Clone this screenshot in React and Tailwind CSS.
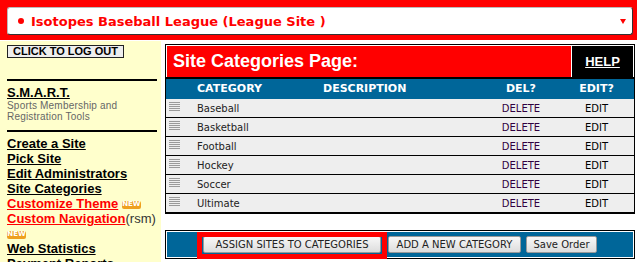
const categories = ['Baseball', 'Basketball', 'Football', 'Hockey', 'Soccer', 'Ultimate'];

function DragHandle() {
  return (
    <svg width="11" height="10" viewBox="0 0 11 10">
      {[0.5, 2.5, 4.5, 6.5, 8.5].map((y) => (
        <line key={y} x1="0" x2="11" y1={y} y2={y} stroke="#9a9a9a" strokeWidth="1" />
      ))}
    </svg>
  );
}

function NewBadge() {
  return (
    <span className="inline-flex items-center justify-center align-middle w-[19px] h-[8px] rounded-[2px] bg-[#eea020] text-white text-[7px] font-bold leading-none font-['DejaVu_Sans',sans-serif] no-underline">
      NEW
    </span>
  );
}

function SideLink({ children, red }) {
  return (
    <a className={red ? 'underline text-[#ff0000]' : 'underline text-black'} href="#">
      {children}
    </a>
  );
}

export default function App() {
  return (
    <div className="w-[640px] h-[262px] overflow-hidden bg-white font-['Liberation_Sans',Arial,sans-serif]">
      {/* site picker */}
      <div className="w-[637px] h-[40px] bg-[#ff0000] pt-[7px] pl-[7px] pr-[4px] pb-[5px]">
        <div className="h-full bg-white rounded-[3px] border border-[#bbb] border-r-[#333] border-b-[#333] flex items-center pl-[10px] pr-[6px]">
          <span className="w-[6px] h-[6px] rounded-full bg-[#ff0000]" />
          <span className="ml-[7px] text-[13px] leading-none font-bold text-[#ff0000] font-['DejaVu_Sans',sans-serif]">
            Isotopes Baseball League (League Site )
          </span>
          <svg className="ml-auto" width="6" height="5" viewBox="0 0 6 5">
            <polygon points="0,0 6,0 3,5" fill="#ff0000" />
          </svg>
        </div>
      </div>

      <div className="flex mt-[1px] h-[221px]">
        {/* sidebar */}
        <div className="w-[161px] shrink-0 bg-[#ffffcc] pl-[7px] pt-[4px]">
          <button className="w-[117px] h-[13px] border border-[#222] bg-[#eeeeee] text-[11px] leading-[11px] font-bold text-black flex items-center justify-center">
            CLICK TO LOG OUT
          </button>
          <div className="mt-[21px] w-[150px] h-[2px] bg-black" />
          <div className="mt-[4px] text-[13px] leading-[15px] font-bold">
            <SideLink>S.M.A.R.T.</SideLink>
          </div>
          <div className="text-[10px] leading-[11px] tracking-[0.2px] text-[#666]">
            Sports Membership and
            <br />
            Registration Tools
          </div>
          <div className="mt-[8px] w-[150px] h-[2px] bg-black" />
          <div className="mt-[4px] text-[13px] leading-[15px] font-bold whitespace-nowrap">
            <div><SideLink>Create a Site</SideLink></div>
            <div><SideLink>Pick Site</SideLink></div>
            <div><SideLink>Edit Administrators</SideLink></div>
            <div><SideLink>Site Categories</SideLink></div>
            <div>
              <SideLink red>Customize Theme</SideLink> <NewBadge />
            </div>
            <div>
              <SideLink red>Custom Navigation</SideLink>
              <span className="font-normal text-[#333]">(rsm)</span>
            </div>
            <div><NewBadge /></div>
            <div><SideLink>Web Statistics</SideLink></div>
            <div><SideLink>Payment Reports</SideLink></div>
          </div>
        </div>

        {/* content */}
        <div className="ml-[4px] mt-[3px] w-[470px]">
          <div className="border border-black">
            <div className="flex gap-[1px] p-[1px] pb-0 border-b-2 border-black">
              <div className="flex-1 h-[31px] bg-[#ff0000] flex items-center pl-[6px] text-white text-[18px] font-bold">
                Site Categories Page:
              </div>
              <div className="w-[61px] h-[31px] bg-black flex items-center justify-center">
                <a href="#" className="text-white underline text-[13px] font-bold">HELP</a>
              </div>
            </div>

            <div className="font-['DejaVu_Sans',Verdana,sans-serif]">
              <div className="grid grid-cols-[31px_126px_160px_76px_1fr] h-[20px] items-center bg-[#006699] text-white text-[11px] font-bold">
                <span />
                <span>CATEGORY</span>
                <span>DESCRIPTION</span>
                <span className="text-center">DEL?</span>
                <span className="text-center">EDIT?</span>
              </div>
              {categories.map((name) => (
                <div
                  key={name}
                  className="grid grid-cols-[31px_126px_160px_76px_1fr] h-[19px] items-center bg-[#eeeeee] border-b border-black text-[10px] text-[#222]"
                >
                  <span className="self-start pt-[3px] pl-[3px]">
                    <DragHandle />
                  </span>
                  <span>{name}</span>
                  <span />
                  <span className="text-center text-[#300040]">DELETE</span>
                  <span className="text-center text-black">EDIT</span>
                </div>
              ))}
            </div>
          </div>

          <div className="mt-[16px] border border-black p-[1px]">
            <div className="h-[25px] bg-[#006699] flex items-center justify-center font-['DejaVu_Sans',Verdana,sans-serif] text-[10px] text-[#222]">
              <div className="relative">
                <button className="w-[178px] h-[17px] border border-[#999] rounded-[2px] bg-gradient-to-b from-[#f8f8f8] to-[#dddddd] flex items-center justify-center">
                  ASSIGN SITES TO CATEGORIES
                </button>
                <div className="absolute left-[-6px] right-[-6px] top-[-4px] bottom-[-6px] border-[5px] border-[#ff0000]" />
              </div>
              <button className="ml-[7px] w-[133px] h-[17px] border border-[#999] rounded-[2px] bg-gradient-to-b from-[#f8f8f8] to-[#dddddd] flex items-center justify-center">
                ADD A NEW CATEGORY
              </button>
              <button className="ml-[5px] w-[71px] h-[17px] border border-[#999] rounded-[2px] bg-gradient-to-b from-[#f8f8f8] to-[#dddddd] flex items-center justify-center">
                Save Order
              </button>
            </div>
          </div>
        </div>
      </div>
    </div>
  );
}
